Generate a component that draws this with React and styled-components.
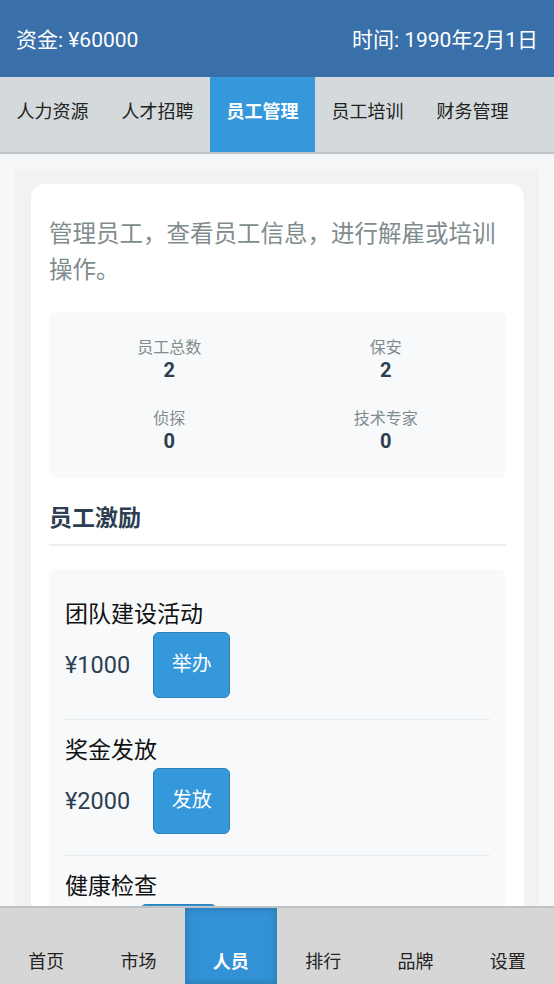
import React from 'react';
import styled, { createGlobalStyle } from 'styled-components';

const GlobalStyle = createGlobalStyle`
    * {
        box-sizing: border-box;
    }

    body {
        margin: 0;
        background: #f5f7f8;
        font-family: Roboto, "Noto Sans CJK SC", sans-serif;
        color: #222;
    }
`

const tabs = ['人力资源', '人才招聘', '员工管理', '员工培训', '财务管理'];
const navItems = ['首页', '市场', '人员', '排行', '品牌', '设置'];

const stats = [
    { label: '员工总数', value: 2 },
    { label: '保安', value: 2 },
    { label: '侦探', value: 0 },
    { label: '技术专家', value: 0 },
];

const incentives = [
    { title: '团队建设活动', price: 1000, action: '举办' },
    { title: '奖金发放', price: 2000, action: '发放' },
    { title: '健康检查', price: 500, action: '安排' },
    { title: '年度旅游', price: 5000, action: '组织' },
];

export default () => {

    return (
        <Page>
            <GlobalStyle />
            <Header>
                <span>资金: ¥60000</span>
                <span>时间: 1990年2月1日</span>
            </Header>
            <TabBar>
                {tabs.map(tab => (
                    <Tab key={tab} $active={tab === '员工管理'}>{tab}</Tab>
                ))}
            </TabBar>
            <Main>
                <Panel>
                    <Card>
                        <Desc>管理员工，查看员工信息，进行解雇或培训操作。</Desc>
                        <StatGrid>
                            {stats.map(stat => (
                                <Stat key={stat.label}>
                                    <div className="stat-label">{stat.label}</div>
                                    <div className="stat-value">{stat.value}</div>
                                </Stat>
                            ))}
                        </StatGrid>
                        <SectionTitle>员工激励</SectionTitle>
                        <IncentiveList>
                            {incentives.map(item => (
                                <Incentive key={item.title}>
                                    <div className="incentive-title">{item.title}</div>
                                    <div className="incentive-row">
                                        <span className="incentive-price">¥{item.price}</span>
                                        <ActionButton>{item.action}</ActionButton>
                                    </div>
                                </Incentive>
                            ))}
                        </IncentiveList>
                    </Card>
                </Panel>
            </Main>
            <BottomNav>
                {navItems.map(item => (
                    <NavItem key={item} $active={item === '人员'}>{item}</NavItem>
                ))}
            </BottomNav>
        </Page>
    )
}

const Page = styled.div`
    min-height: 100vh;
    padding-bottom: 90px;
`

const Header = styled.div`
    height: 77px;
    background: #3970a9;
    color: #fff;
    font-size: 21px;
    display: flex;
    justify-content: space-between;
    align-items: center;
    padding: 0 16px 2px;
`

const TabBar = styled.div`
    display: flex;
    height: 77px;
    background: #d4dadb;
    border-bottom: 2px solid #bdc3c7;
    box-shadow: 0 2px 6px rgba(0, 0, 0, 0.04);
`

const Tab = styled.div`
    flex: 0 0 auto;
    padding: 0 16.5px 10px;
    display: flex;
    align-items: center;
    font-size: 18px;
    color: ${p => p.$active ? '#fff' : '#222'};
    font-weight: ${p => p.$active ? 700 : 400};
    background: ${p => p.$active ? '#3498db' : 'transparent'};
`

const Main = styled.div`
    padding: 15px 15px 0;
`

const Panel = styled.div`
    background: #f2f2f2;
    padding: 15px 15px 0 16px;
`

const Card = styled.div`
    background: #fff;
    border-radius: 14px;
    padding: 18px 18px 24px;
`

const Desc = styled.p`
    margin: 14px 0 24px;
    font-size: 23.5px;
    line-height: 36px;
    color: #7f8c8d;
`

const StatGrid = styled.div`
    display: grid;
    grid-template-columns: 1fr 1fr;
    column-gap: 16px;
    row-gap: 27px;
    padding: 26px 20px 25px;
    background: #f7f9fa;
    border-radius: 8px;
`

const Stat = styled.div`
    text-align: center;

    &> .stat-label{
        font-size: 16px;
        line-height: 20px;
        color: #7f8c8d;
    }

    &> .stat-value{
        font-size: 20px;
        line-height: 24px;
        font-weight: 700;
        color: #2c3e50;
    }
`

const SectionTitle = styled.div`
    margin-top: 25px;
    padding-bottom: 9px;
    border-bottom: 2px solid #eceeef;
    font-size: 23px;
    line-height: 32px;
    font-weight: 700;
    color: #2c3e50;
`

const IncentiveList = styled.div`
    margin-top: 23px;
    padding: 15px 16px;
    background: #f7f9fa;
    border-radius: 8px;
`

const Incentive = styled.div`
    padding: 16px 0 21px;
    border-bottom: 1px solid #e8ebed;

    &:last-child{
        border-bottom: none;
    }

    &> .incentive-title{
        font-size: 23px;
        line-height: 30px;
        color: #111;
    }

    &> .incentive-row{
        margin-top: 2px;
        display: flex;
        align-items: center;
        gap: 23px;

        &> .incentive-price{
            font-size: 23.5px;
            color: #2c3e50;
        }
    }
`

const ActionButton = styled.button`
    width: 77px;
    height: 66px;
    background: #3498db;
    border: 1px solid #2a80b9;
    border-radius: 6px;
    color: #fff;
    font-family: inherit;
    font-size: 20px;
    padding: 0 0 6px;
`

const BottomNav = styled.div`
    position: fixed;
    left: 0;
    right: 0;
    bottom: 0;
    height: 78px;
    display: flex;
    background: #d6d6d6;
    border-top: 2px solid #bfc1c3;
`

const NavItem = styled.div`
    flex: 1;
    display: flex;
    justify-content: center;
    align-items: flex-end;
    padding-bottom: 10px;
    font-size: 18px;
    line-height: 24px;
    color: ${p => p.$active ? '#fff' : '#222'};
    font-weight: ${p => p.$active ? 700 : 400};
    background: ${p => p.$active ? '#3392d6' : 'transparent'};
    box-shadow: ${p => p.$active ? 'inset 0 0 8px rgba(0, 0, 0, 0.22)' : 'none'};
`
